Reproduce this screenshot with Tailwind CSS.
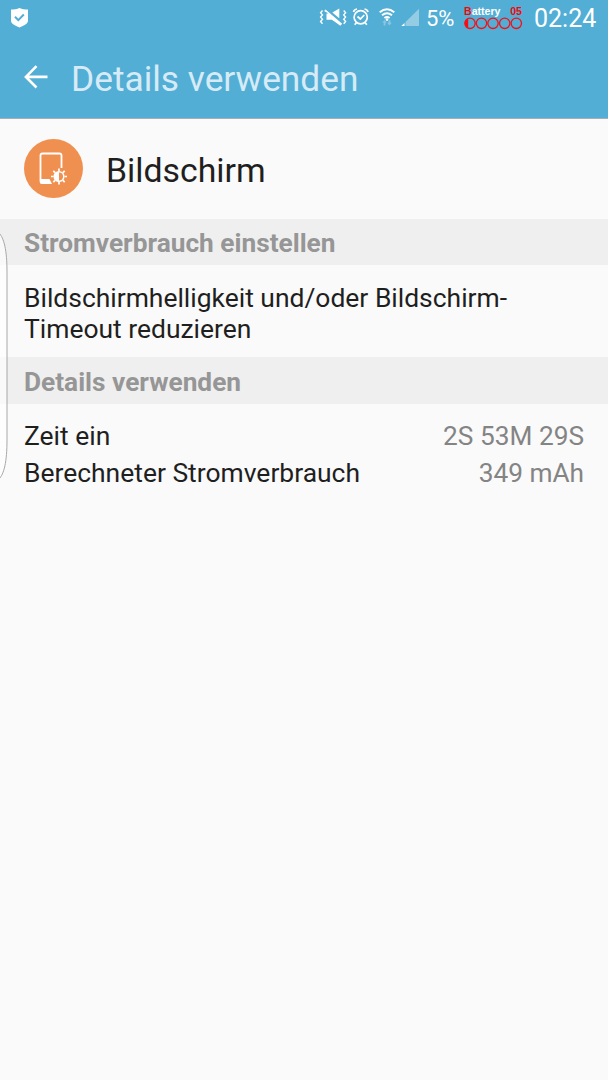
<!DOCTYPE html>
<html lang="de">
<head>
<meta charset="utf-8">
<meta name="viewport" content="width=device-width, initial-scale=1">
<title>Details verwenden</title>
<script src="https://cdn.jsdelivr.net/npm/@tailwindcss/browser@4"></script>
</head>
<body class="relative h-[1080px] w-[608px] overflow-hidden bg-[#fafafa] font-['Roboto',sans-serif] text-[#1f1f1f]">
<div class="h-[119px] border-b border-[#a3afb5] bg-[#52aed5] text-white">
  <div class="flex h-9 items-center justify-between pl-[11px] pr-[12px]">
    <svg class="h-5 w-[18px]" viewBox="0 0 18 20"><path fill="#fff" d="M8.500 0C6 1.300 3 1.600 0 1.600v11c0 3.200 4 5.200 8.500 7 4.500-1.800 8.500-3.800 8.500-7v-11C14 1.600 11 1.300 8.500 0z"/><path d="M4 8.800l3.300 3.300 5.500-5.600" fill="none" stroke="#52aed5" stroke-width="2"/></svg>
    <div class="flex items-center">
      <svg class="h-9 w-[106px]" viewBox="314 0 106 36" fill="none" stroke="#fff">
        <path fill="#fff" stroke="none" d="M325.500 9.500l16.700 14.200-1.900 2-4.800-3.500-3.700-2.500h-5.300v-6.200h2.200l-4.600-2.600zM332.300 12.500L339.300 8.500V18.300z"/>
        <path stroke-width="1.400" d="M322.500 10.500l-1.900 2.200 1.900 2.200-1.900 2.200 1.900 2.200-1.900 2.200 1.900 2.200M343.700 10.500l1.900 2.200-1.900 2.200 1.900 2.200-1.900 2.200 1.900 2.200-1.900 2.200"/>
        <circle cx="360.700" cy="17.200" r="6.600" stroke-width="1.700"/>
        <path stroke-width="1.700" d="M357.500 16.500l2.800 2.500 4-4M356.500 22.500l-1.800 2.300M365 22.500l1.800 2.300M353.500 12q.5-2.500 3.500-3M368 12q-.5-2.500-3.500-3"/>
        <path stroke-width="1.900" d="M379.700 12.300q7.300-6 14.600 0M382 15.300q5-4.200 10 0M384.400 18q2.600-2 5.200 0"/>
        <circle cx="387" cy="19.600" r="1.300" fill="#fff" stroke="none"/>
        <path fill="#8ac6e1" stroke="none" d="M383.600 25.500v-3h-1.400l2.400-2.500 2.300 2.500h-1.400v3zM388.500 20.300h1.900v2.400h1.400l-2.400 2.700-2.300-2.700h1.400z"/>
        <path fill="#94cce4" stroke="none" d="M405.500 26v-4L419 8.800V26z"/><path fill="#fff" stroke="none" d="M401.300 26l3.200-3V26z"/>
      </svg>
      <span class="mt-[2px] ml-[6px] w-[38px] whitespace-nowrap text-[22px] leading-[36px]">5%</span>
      <div class="-mt-px flex w-[59px] flex-col">
        <div class="flex h-[12px] justify-between whitespace-nowrap pr-px font-['Liberation_Sans',sans-serif] text-[10.600px] font-bold leading-[12px]"><span><span class="text-[#f00808]">B</span>attery</span><span class="text-[#f00808]">05</span></div>
        <svg class="h-[13px] w-[60px]" viewBox="0 0 60 13" fill="none" stroke="#fa0d12" stroke-width="1.300"><circle cx="6" cy="6.300" r="5.200"/><circle cx="17.500" cy="6.300" r="5.200"/><circle cx="29" cy="6.300" r="5.200"/><circle cx="40.700" cy="6.300" r="5.200"/><circle cx="52.300" cy="6.300" r="5.200"/><path fill="#fa0d12" stroke="none" d="M4.200 1.500a5.200 5.200 0 0 0 0 9.700z"/></svg>
      </div>
      <span class="mt-[1px] ml-[11px] w-[62px] whitespace-nowrap text-[25px] leading-[36px]">02:24</span>
    </div>
  </div>
  <div class="flex h-[82px] items-center pl-6">
    <svg class="h-6 w-6" viewBox="0 0 24 24" fill="none" stroke="#fff" stroke-width="2.600"><path d="M12.500 1.200L1.900 11.900 12.500 22.500M2 11.900h21.500"/></svg>
    <h1 class="ml-[23px] pt-[3px] whitespace-nowrap text-[35.300px] leading-[42px] text-[#d6ebf5]">Details verwenden</h1>
  </div>
</div>
<div class="flex h-[100px] items-center pl-6">
  <svg class="h-[60px] w-[60px]" viewBox="0 0 60 60"><circle cx="29.500" cy="29.500" r="29.500" fill="#f09050"/>
    <g fill="none" stroke="#fff"><path stroke-width="1.800" d="M37.500 29V16.500q0-2-2-2H18.500q-2 0-2 2V42q0 2 2 2H25"/><path fill="#fff" stroke="none" d="M16 40h9.500l2.500 5H18q-2 0-2-2z"/>
    <circle cx="35" cy="37.500" r="4.800" stroke-width="1.500"/><path fill="#fff" stroke="none" d="M35 32.700a4.800 4.800 0 0 0 0 9.600z"/><path stroke-width="1.700" d="M35 29.500v2.500M35 43v2.500M27 37.500h2.500M40.500 37.500H43M29.300 31.800l1.800 1.800M38.900 41.400l1.800 1.800M40.700 31.800l-1.800 1.800M31.100 41.400l-1.800 1.800"/></g></svg>
  <h2 class="ml-[22px] pt-[3px] text-[33.800px] leading-10">Bildschirm</h2>
</div>
<h3 class="h-[46px] bg-[#efefef] pl-6 pt-px text-[26.250px] font-bold leading-[46px] text-[#969696]">Stromverbrauch einstellen</h3>
<p class="h-[92px] whitespace-nowrap pl-6 pt-[17px] text-[26.450px] leading-[31px]">Bildschirmhelligkeit und/oder Bildschirm-<br>Timeout reduzieren</p>
<h3 class="h-[47px] bg-[#efefef] pl-6 pt-[2px] text-[26.250px] font-bold leading-[46px] text-[#969696]">Details verwenden</h3>
<div class="px-6 pt-[13px] text-[26.450px] leading-[37px]">
  <div class="flex h-[37px] items-baseline justify-between"><span>Zeit ein</span><span class="text-[26.250px] text-[#848484]">2S 53M 29S</span></div>
  <div class="flex h-[37px] items-baseline justify-between"><span>Berechneter Stromverbrauch</span><span class="text-[26.250px] text-[#848484]">349 mAh</span></div>
</div>
<svg class="absolute left-0 top-[225px] h-[262px] w-[10px]" viewBox="0 225 10 262"><path d="M-1 233C4 238 7 250 7 272V440C7 462 4 474-1 479z" fill="#fff" fill-opacity=".6" stroke="#a8a8a8"/></svg>
</body>
</html>
